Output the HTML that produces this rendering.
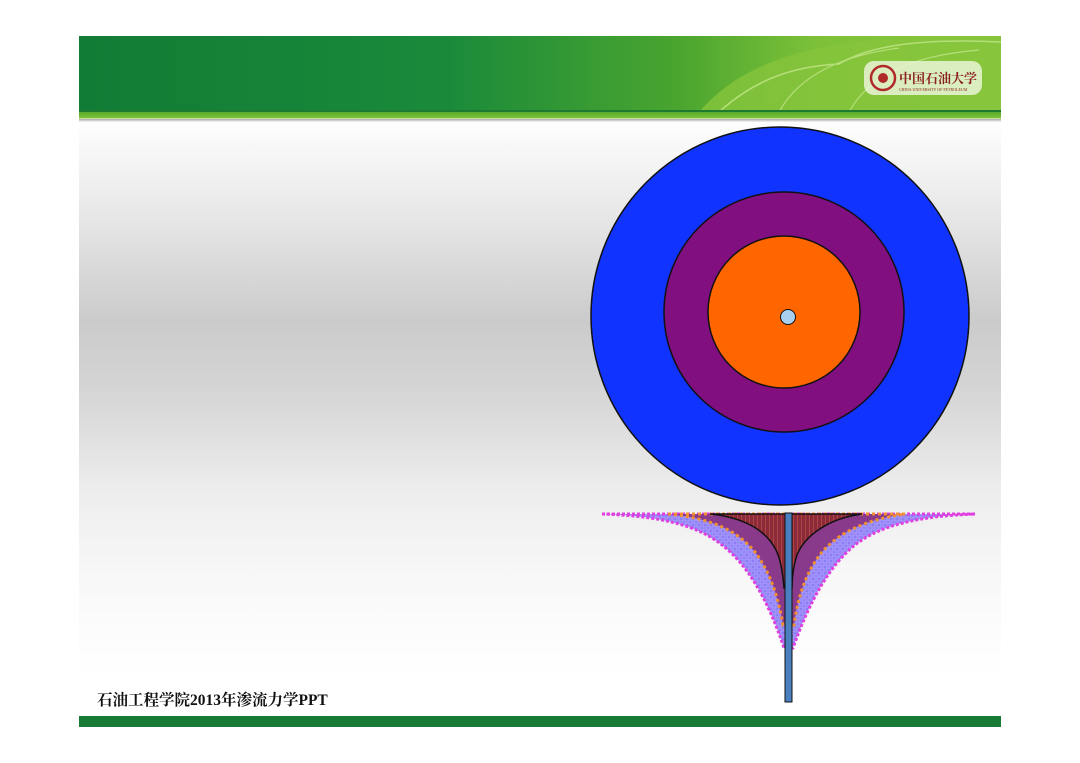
<!DOCTYPE html>
<html><head><meta charset="utf-8">
<style>
html,body{margin:0;padding:0;background:#fff;}
body{width:1080px;height:763px;position:relative;overflow:hidden;font-family:"Liberation Serif","Noto Serif CJK SC",serif;}
.slide{position:absolute;left:79px;top:36px;width:922px;height:691px;
background:linear-gradient(to bottom,#fff 80px,#f6f6f6 120px,#e2e2e2 200px,#cbcbcb 285px,#d6d6d6 360px,#ececec 450px,#f8f8f8 540px,#fff 640px);}
.hdr{position:absolute;left:0;top:0;width:922px;height:74px;overflow:hidden;
background:linear-gradient(to right,#117c35 0%,#1a8a3a 40%,#4aa52f 65%,#7dc139 80%,#8ac83e 100%);}
.s0{position:absolute;left:0;top:74px;width:922px;height:2px;background:#1d7a30;}
.s1{position:absolute;left:0;top:76px;width:922px;height:6px;background:linear-gradient(#5aab2a,#7cc23c);}
.s2{position:absolute;left:0;top:82px;width:922px;height:1px;background:#c8e29a;}
.s3{position:absolute;left:0;top:83px;width:922px;height:3px;background:linear-gradient(#a9a9a9,#f4f4f4);}
.foot{position:absolute;left:0;top:680px;width:922px;height:11px;background:#177a35;}
.ft{position:absolute;left:18px;top:652px;font-size:15.5px;font-weight:bold;color:#111;}
</style></head><body>
<div class="slide">
 <div class="hdr">
  <svg width="922" height="76" style="position:absolute;left:0;top:0">
   <path d="M620 76 C660 30 720 10 800 4 L922 0 L922 76 Z" fill="#86c43c" opacity="0.8"/>
   <path d="M640 76 C680 40 720 30 760 28 C790 10 840 2 922 6" fill="none" stroke="#b6df7a" stroke-width="1.5"/>
   <path d="M700 76 C720 40 760 20 820 12" fill="none" stroke="#b6df7a" stroke-width="1.2"/>
   <path d="M770 76 C790 40 830 20 900 14" fill="none" stroke="#b6df7a" stroke-width="1.2"/>
   <rect x="785" y="25" width="118" height="34" rx="10" fill="#eaf4d6" opacity="0.85"/>
   <circle cx="804" cy="42" r="12" fill="none" stroke="#b02a2a" stroke-width="2.5"/>
   <circle cx="804" cy="42" r="5" fill="#b02a2a"/>
   <text x="820" y="47" font-size="13" font-weight="bold" fill="#8a1f1f" font-family="Noto Serif CJK SC,serif">中国石油大学</text>
   <text x="820" y="55" font-size="4" fill="#8a1f1f">CHINA UNIVERSITY OF PETROLEUM</text>
  </svg>
 </div>
 <div class="s0"></div><div class="s1"></div><div class="s2"></div><div class="s3"></div>
 <div class="ft">石油工程学院2013年渗流力学PPT</div>
 <div class="foot"></div>
</div>
<svg width="1080" height="763" style="position:absolute;left:0;top:0">
 <defs>
  <pattern id="pb" width="6" height="6" patternUnits="userSpaceOnUse"><rect width="6" height="6" fill="#8c7cf5"/><rect x="1" y="1" width="4" height="4" fill="none" stroke="#b6aaff" stroke-width="0.8"/></pattern>
  <pattern id="pr" width="4" height="4" patternUnits="userSpaceOnUse"><rect width="4" height="4" fill="#8a2a3a"/><rect x="1" width="1" height="4" fill="#b04440"/></pattern>
 </defs>
 <circle cx="780" cy="316" r="189" fill="#1133ff" stroke="#111" stroke-width="1.5"/>
 <circle cx="784" cy="312" r="120" fill="#810f80" stroke="#111" stroke-width="1.5"/>
 <circle cx="784" cy="312" r="76" fill="#ff6600" stroke="#111" stroke-width="1.5"/>
 <circle cx="788" cy="317" r="7.5" fill="#a6cff0" stroke="#111" stroke-width="1"/>
 <path d="M602 514 L975 514 C920 516 880 525 855 545 C830 565 810 600 793 648 L784 648 C768 600 748 565 722 545 C697 525 660 516 602 514 Z" fill="url(#pb)" stroke="#e040e0" stroke-width="3" stroke-dasharray="3 2"/>
 <path d="M668 514 L905 514 C865 520 840 532 822 552 C806 572 798 596 794 625 L783 625 C778 596 770 572 755 552 C737 530 710 518 668 514 Z" fill="#8a3a8a" stroke="#f09030" stroke-width="3" stroke-dasharray="3 3"/>
 <path d="M710 514 L862 514 C830 518 805 535 797 555 C793 567 792 578 792 588 L784 588 C783 575 781 560 776 550 C765 528 740 517 710 514 Z" fill="url(#pr)" stroke="#111" stroke-width="1.5"/>
 <rect x="785" y="513" width="7" height="189" fill="#4a80c0" stroke="#111" stroke-width="1"/>
</svg>
</body></html>
